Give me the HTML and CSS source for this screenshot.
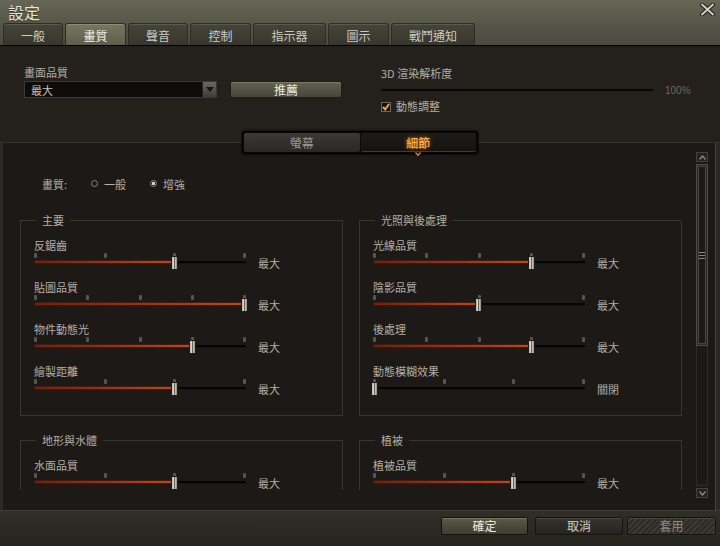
FILE: index.html
```html
<!DOCTYPE html>
<html lang="zh-TW">
<head>
    <meta charset="UTF-8">
    <title>設定</title>
    <link rel="stylesheet" href="styles.css">
</head>
<body>
    <div class="window">
        <header class="titlebar">
            <span class="title">設定</span>
            <svg class="close" width="15" height="13" viewBox="0 0 15 13">
                <path d="M2 1.5 L13 11.5 M13 1.5 L2 11.5" stroke="#1e1e18" stroke-width="4" stroke-linecap="round"/>
                <path d="M2 1.5 L13 11.5 M13 1.5 L2 11.5" stroke="#cfcfc6" stroke-width="2" stroke-linecap="round"/>
            </svg>
        </header>

        <nav class="tabs">
            <span class="tab w60">一般</span>
            <span class="tab w61 active">畫質</span>
            <span class="tab w60">聲音</span>
            <span class="tab w61">控制</span>
            <span class="tab w73">指示器</span>
            <span class="tab w61">圖示</span>
            <span class="tab w84">戰鬥通知</span>
        </nav>

        <main class="body">
            <section class="top">
                <div class="quality">
                    <div class="label">畫面品質</div>
                    <div class="quality-row">
                        <div class="select">
                            <span>最大</span>
                            <span class="select-arrow"></span>
                        </div>
                        <button class="btn-olive">推薦</button>
                    </div>
                </div>
                <div class="render">
                    <div class="label">3D 渲染解析度</div>
                    <div class="res-row">
                        <div class="res-bar"></div>
                        <span class="res-val">100%</span>
                    </div>
                    <div class="check">
                        <span class="check-box">
                            <svg width="8" height="8" viewBox="0 0 8 8"><path d="M1 4 L3.2 6.5 L7 1" fill="none" stroke="#f0a23c" stroke-width="2"/></svg>
                        </span>
                        動態調整
                    </div>
                </div>
            </section>

            <div class="subtabs">
                <span class="subtab">螢幕</span>
                <span class="subtab on">細節<i class="chev"></i></span>
            </div>

            <section class="detail">
                <div class="content">
                    <div class="mode">
                        <span class="mode-label">畫質:</span>
                        <span class="radio"></span><span class="mode-opt">一般</span>
                        <span class="radio checked"></span><span class="mode-opt">增強</span>
                    </div>

                    <div class="groups">
                        <fieldset class="group">
                            <legend>主要</legend>
                            <div class="group-body">
                                <div class="opt">
                                    <div class="opt-label">反鋸齒</div>
                                    <div class="opt-ctl">
                                        <div class="slider">
                                            <div class="ticks"><i></i><i></i><i></i><i></i></div>
                                            <div class="track"><b class="fill" style="width:141px"></b></div>
                                            <span class="thumb" style="left:137px"></span>
                                        </div>
                                        <span class="opt-val">最大</span>
                                    </div>
                                </div>
                                <div class="opt">
                                    <div class="opt-label">貼圖品質</div>
                                    <div class="opt-ctl">
                                        <div class="slider">
                                            <div class="ticks"><i></i><i></i><i></i><i></i><i></i></div>
                                            <div class="track"><b class="fill" style="width:211px"></b></div>
                                            <span class="thumb" style="left:207px"></span>
                                        </div>
                                        <span class="opt-val">最大</span>
                                    </div>
                                </div>
                                <div class="opt">
                                    <div class="opt-label">物件動態光</div>
                                    <div class="opt-ctl">
                                        <div class="slider">
                                            <div class="ticks"><i></i><i></i><i></i><i></i><i></i></div>
                                            <div class="track"><b class="fill" style="width:159px"></b></div>
                                            <span class="thumb" style="left:155px"></span>
                                        </div>
                                        <span class="opt-val">最大</span>
                                    </div>
                                </div>
                                <div class="opt">
                                    <div class="opt-label">繪製距離</div>
                                    <div class="opt-ctl">
                                        <div class="slider">
                                            <div class="ticks"><i></i><i></i><i></i><i></i></div>
                                            <div class="track"><b class="fill" style="width:141px"></b></div>
                                            <span class="thumb" style="left:137px"></span>
                                        </div>
                                        <span class="opt-val">最大</span>
                                    </div>
                                </div>
                            </div>
                        </fieldset>

                        <fieldset class="group">
                            <legend>光照與後處理</legend>
                            <div class="group-body">
                                <div class="opt">
                                    <div class="opt-label">光線品質</div>
                                    <div class="opt-ctl">
                                        <div class="slider">
                                            <div class="ticks"><i></i><i></i><i></i><i></i><i></i></div>
                                            <div class="track"><b class="fill" style="width:159px"></b></div>
                                            <span class="thumb" style="left:155px"></span>
                                        </div>
                                        <span class="opt-val">最大</span>
                                    </div>
                                </div>
                                <div class="opt">
                                    <div class="opt-label">陰影品質</div>
                                    <div class="opt-ctl">
                                        <div class="slider">
                                            <div class="ticks"><i></i><i></i><i></i></div>
                                            <div class="track"><b class="fill" style="width:107px"></b></div>
                                            <span class="thumb" style="left:102px"></span>
                                        </div>
                                        <span class="opt-val">最大</span>
                                    </div>
                                </div>
                                <div class="opt">
                                    <div class="opt-label">後處理</div>
                                    <div class="opt-ctl">
                                        <div class="slider">
                                            <div class="ticks"><i></i><i></i><i></i><i></i><i></i></div>
                                            <div class="track"><b class="fill" style="width:159px"></b></div>
                                            <span class="thumb" style="left:155px"></span>
                                        </div>
                                        <span class="opt-val">最大</span>
                                    </div>
                                </div>
                                <div class="opt">
                                    <div class="opt-label">動態模糊效果</div>
                                    <div class="opt-ctl">
                                        <div class="slider">
                                            <div class="ticks"><i></i><i></i><i></i><i></i></div>
                                            <div class="track"><b class="fill" style="width:0"></b></div>
                                            <span class="thumb" style="left:-2px"></span>
                                        </div>
                                        <span class="opt-val">關閉</span>
                                    </div>
                                </div>
                            </div>
                        </fieldset>

                        <fieldset class="group">
                            <legend>地形與水體</legend>
                            <div class="group-body">
                                <div class="opt">
                                    <div class="opt-label">水面品質</div>
                                    <div class="opt-ctl">
                                        <div class="slider">
                                            <div class="ticks"><i></i><i></i><i></i><i></i></div>
                                            <div class="track"><b class="fill" style="width:141px"></b></div>
                                            <span class="thumb" style="left:137px"></span>
                                        </div>
                                        <span class="opt-val">最大</span>
                                    </div>
                                </div>
                            </div>
                        </fieldset>

                        <fieldset class="group">
                            <legend>植被</legend>
                            <div class="group-body">
                                <div class="opt">
                                    <div class="opt-label">植被品質</div>
                                    <div class="opt-ctl">
                                        <div class="slider">
                                            <div class="ticks"><i></i><i></i><i></i><i></i></div>
                                            <div class="track"><b class="fill" style="width:141px"></b></div>
                                            <span class="thumb" style="left:137px"></span>
                                        </div>
                                        <span class="opt-val">最大</span>
                                    </div>
                                </div>
                            </div>
                        </fieldset>
                    </div>
                </div>

                <!-- 捲軸 -->
                <div class="scrollbar">
                    <span class="sb-btn">
                        <svg width="7" height="5" viewBox="0 0 7 5"><path d="M0.5 4.5 L3.5 1 L6.5 4.5" fill="none" stroke="#8a887e" stroke-width="1.4"/></svg>
                    </span>
                    <div class="sb-track">
                        <div class="sb-thumb"><span class="grip"></span></div>
                    </div>
                    <span class="sb-btn">
                        <svg width="7" height="5" viewBox="0 0 7 5"><path d="M0.5 0.5 L3.5 4 L6.5 0.5" fill="none" stroke="#8a887e" stroke-width="1.4"/></svg>
                    </span>
                </div>
            </section>
        </main>

        <footer class="footer">
            <button class="fbtn ok">確定</button>
            <button class="fbtn cancel">取消</button>
            <button class="fbtn apply">套用</button>
        </footer>
    </div>
</body>
</html>
```

FILE: styles.css
```css
* {
    box-sizing: border-box;
}

body {
    margin: 0;
    background: #000;
    font-family: "Noto Sans CJK TC", "Noto Sans", sans-serif;
}

.window {
    width: 720px;
    height: 546px;
    display: flex;
    flex-direction: column;
    overflow: hidden;
    background: #1c1916;
}

/* 標題列 */
.titlebar {
    height: 23px;
    flex: none;
    display: flex;
    justify-content: space-between;
    align-items: center;
    padding: 0 5px 0 8px;
    background: linear-gradient(#666654, #57574a);
}

.title {
    color: #e6e6de;
    font-size: 16px;
    line-height: 20px;
    text-shadow: 0 1px 1px rgba(0, 0, 0, 0.5);
}

.close {
    margin-top: -4px;
}

/* 頁籤 */
.tabs {
    height: 22px;
    flex: none;
    display: flex;
    gap: 2px;
    padding-left: 3px;
    background: linear-gradient(#55554a, #4a4a3f);
}

.tab {
    display: flex;
    align-items: center;
    justify-content: center;
    padding-top: 2px;
    color: #cdcbc0;
    font-size: 12px;
    background: linear-gradient(#44443a, #38372f);
    border: 1px solid #2d2c25;
    border-bottom: none;
    border-radius: 3px 3px 0 0;
    box-shadow: inset 0 1px 0 #5a5a4c;
}

.tab.active {
    color: #f2f2ea;
    background: linear-gradient(#77775f, #5d5d4d);
    box-shadow: inset 0 1px 0 #8c8c74;
}

.w60 { width: 60px; }
.w61 { width: 61px; }
.w73 { width: 73px; }
.w84 { width: 84px; }

/* 內容 */
.body {
    flex: 1;
    min-height: 0;
    overflow: hidden;
    display: flex;
    flex-direction: column;
    border-top: 1px solid #000;
    box-shadow: inset 3px 0 0 #2c2a25, inset -4px 0 0 #2a2823, inset -5px 0 0 #45433b;
}

.top {
    height: 97px;
    flex: none;
    display: flex;
    padding: 20px 0 0 24px;
    background: #24211d;
    border-bottom: 1px solid #35322c;
}

.label {
    font-size: 11px;
    line-height: 13px;
    color: #b3afa6;
}

.quality {
    width: 357px;
}

.quality-row {
    display: flex;
    gap: 13px;
    margin-top: 2px;
}

.select {
    width: 193px;
    height: 17px;
    display: flex;
    justify-content: space-between;
    align-items: center;
    padding-left: 6px;
    font-size: 11px;
    color: #c6c2b9;
    background: #0d0c0a;
    border: 1px solid #3c3934;
}

.select-arrow {
    width: 14px;
    height: 15px;
    position: relative;
    background: linear-gradient(#6a6862, #3e3c38);
    border-left: 1px solid #222;
}

.select-arrow::after {
    content: "";
    position: absolute;
    left: 3px;
    top: 5px;
    border-left: 4px solid transparent;
    border-right: 4px solid transparent;
    border-top: 5px solid #151412;
}

.btn-olive {
    width: 112px;
    height: 17px;
    padding: 0;
    font-family: inherit;
    font-size: 12px;
    line-height: 15px;
    color: #eaeae2;
    background: linear-gradient(#63634f, #45453a);
    border: 1px solid #1e1d18;
    border-radius: 2px;
    box-shadow: inset 0 1px 0 #7a7a64;
}

.render {
    padding-top: 1px;
}

.res-row {
    display: flex;
    align-items: center;
    gap: 12px;
    height: 14px;
    margin-top: 3px;
}

.res-bar {
    width: 272px;
    height: 3px;
    background: #080606;
    border-bottom: 1px solid #3a1410;
}

.res-val {
    font-family: "Liberation Sans", sans-serif;
    font-size: 10px;
    color: #6c6862;
}

.check {
    display: flex;
    align-items: center;
    gap: 5px;
    margin-top: 3px;
    font-size: 11px;
    line-height: 13px;
    color: #b3afa6;
}

.check-box {
    width: 10px;
    height: 10px;
    display: flex;
    align-items: center;
    justify-content: center;
    background: #16120e;
    border: 1px solid #6c675f;
}

/* 子頁籤 */
.subtabs {
    position: relative;
    z-index: 1;
    width: 236px;
    height: 23px;
    flex: none;
    margin: -12px auto -11px;
    display: flex;
    padding: 1px;
    gap: 1px;
    background: #0b0a09;
    border: 1px solid #000;
    border-radius: 3px;
    box-shadow: 0 0 3px #000;
}

.subtab {
    flex: 1;
    display: flex;
    align-items: center;
    justify-content: center;
    font-size: 12px;
    color: #9c988f;
    background: linear-gradient(#3b3935, #2a2825);
    border-radius: 2px;
}

.subtab.on {
    position: relative;
    color: #f5b850;
    background: linear-gradient(#1e1b18, #15130f);
    text-shadow: 0 0 4px #e07818, 0 0 1px #d06010;
    border-bottom: 1px solid #8a1e0c;
}

.chev {
    position: absolute;
    left: 54px;
    bottom: -5px;
    width: 6px;
    height: 6px;
    border-right: 2px solid #e07a24;
    border-bottom: 2px solid #e07a24;
    transform: rotate(45deg) scale(0.7);
}

/* 細節 */
.detail {
    flex: 1;
    display: flex;
    min-height: 0;
}

.content {
    flex: 1;
    overflow: hidden;
    padding: 34px 0 0 20px;
    margin-bottom: 20px;
}

.mode {
    display: flex;
    align-items: center;
    height: 13px;
    padding-left: 22px;
    font-size: 11px;
    color: #b3afa6;
}

.mode-label {
    margin-right: 24px;
}

.radio {
    width: 7px;
    height: 7px;
    border: 1px solid #8a867e;
    border-radius: 50%;
    margin-right: 6px;
}

.radio.checked {
    background: radial-gradient(#d8d4cc 45%, transparent 55%);
}

.mode-opt {
    margin-right: 24px;
}

.groups {
    display: grid;
    grid-template-columns: 323px 323px;
    column-gap: 16px;
    row-gap: 18px;
    margin-top: 24px;
}

.group {
    margin: 0;
    padding: 0;
    min-width: 0;
    border: 1px solid #39352f;
}

.group legend {
    margin-left: 15px;
    padding: 0 6px;
    font-size: 11px;
    line-height: 13px;
    color: #b3afa6;
}

.group-body {
    padding: 12px 0 20px 13px;
}

.opt + .opt {
    margin-top: 12px;
}

.opt-label {
    font-size: 11px;
    line-height: 13px;
    color: #b3afa6;
}

.opt-ctl {
    display: flex;
    align-items: flex-start;
    gap: 12px;
    height: 17px;
}

.slider {
    position: relative;
    width: 212px;
    height: 17px;
}

.ticks {
    display: flex;
    justify-content: space-between;
    width: 212px;
    padding-top: 1px;
}

.ticks i {
    width: 3px;
    height: 5px;
    background: #58544e;
    border-radius: 1px;
}

.track {
    position: absolute;
    left: 1px;
    right: 0;
    top: 9px;
    height: 3px;
    background: #060505;
    border-bottom: 1px solid #1a1210;
}

.fill {
    display: block;
    height: 2px;
    background: linear-gradient(90deg, #7a1c0a, #c2461a);
    box-shadow: 0 0 2px #9a2a10;
}

.thumb {
    position: absolute;
    top: 4px;
    width: 7px;
    height: 14px;
    background: linear-gradient(90deg, #b8b4ac, #e2ded6 40%, #6a665f 50%, #cfcbc3 60%, #8c8880);
    border: 1px solid #1e1c1a;
    border-radius: 1px;
}

.opt-val {
    margin-top: 5px;
    font-size: 11px;
    line-height: 13px;
    color: #b3afa6;
}

/* 捲軸 */
.scrollbar {
    width: 12px;
    flex: none;
    display: flex;
    flex-direction: column;
    margin: 9px 12px 12px 0;
}

.sb-btn {
    height: 10px;
    flex: none;
    display: flex;
    align-items: center;
    justify-content: center;
    background: #24221e;
    border: 1px solid #44423a;
}

.sb-track {
    flex: 1;
    margin: 2px 0;
    border: 1px solid #2e2c27;
}

.sb-thumb {
    height: 182px;
    margin: -1px;
    display: flex;
    align-items: center;
    justify-content: center;
    border: 1px solid #4e4c44;
    box-shadow: inset 0 0 0 1px #2c2a25, inset 0 0 0 2px #46443c;
}

.grip {
    width: 6px;
    height: 7px;
    background: repeating-linear-gradient(#8a887e 0 1px, transparent 1px 3px);
}

/* 下方按鈕 */
.footer {
    height: 36px;
    flex: none;
    display: flex;
    justify-content: flex-end;
    gap: 4px;
    padding: 6px 4px 0 0;
    background: linear-gradient(#2f2e27, #26251f);
    border-top: 1px solid #3e3c34;
}

.fbtn {
    width: 88px;
    height: 18px;
    padding: 0;
    font-family: inherit;
    font-size: 12px;
    line-height: 16px;
    border: 1px solid #141310;
    border-radius: 2px;
}

.fbtn.ok {
    width: 87px;
    margin-right: 3px;
    color: #eeeee6;
    background: linear-gradient(#5a5a47, #3d3d31);
    box-shadow: inset 0 1px 0 #73735e;
}

.fbtn.cancel {
    color: #cfcdc4;
    background: linear-gradient(#35332c, #25241f);
    box-shadow: inset 0 1px 0 #4a4840;
}

.fbtn.apply {
    width: 89px;
    color: #8e8c84;
    background: repeating-linear-gradient(135deg, #2c2b26 0 2px, #3a3933 2px 4px);
    box-shadow: inset 0 1px 0 #48463e;
}
```
